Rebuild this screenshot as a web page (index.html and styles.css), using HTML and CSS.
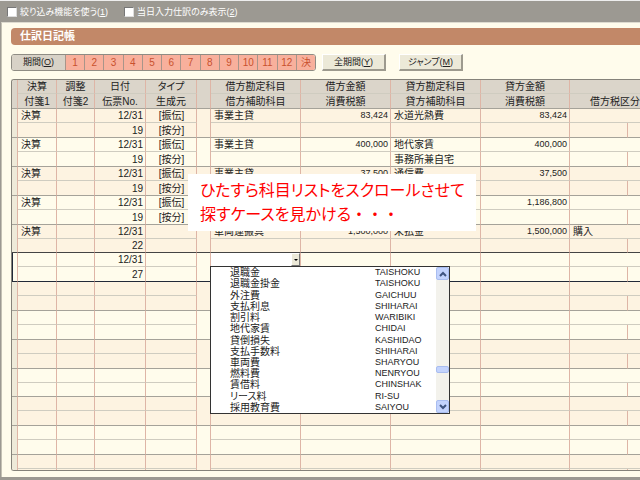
FILE: index.html
```html
<!DOCTYPE html>
<html lang="ja">
<head>
<meta charset="UTF-8">
<title>仕訳日記帳</title>
<link rel="stylesheet" href="styles.css">
</head>
<body>

<!-- Filter bar -->
<div class="toolbar">
  <label><input type="checkbox">絞り込み機能を使う(<u>1</u>)</label>
  <label><input type="checkbox">当日入力仕訳のみ表示(<u>2</u>)</label>
</div>

<main class="panel">
  <h1>仕訳日記帳</h1>

  <div class="controls">
    <div class="period">
      <button class="period-name">期間(<u>O</u>)</button>
      <button>1</button><button>2</button><button>3</button><button>4</button><button>5</button><button>6</button><button>7</button><button>8</button><button>9</button><button>10</button><button>11</button><button>12</button><button>決</button>
    </div>
    <button class="btn">全期間(<u>Y</u>)</button>
    <button class="btn">ジャンプ(<u>M</u>)</button>
  </div>

  <!-- Journal -->
  <div class="sheet">
    <table class="journal">
      <colgroup>
        <col class="c-mark"><col class="c-tag"><col class="c-tag2"><col class="c-date"><col class="c-type"><col class="c-gap">
        <col class="c-account"><col class="c-amount"><col class="c-account"><col class="c-amount2"><col class="c-tax"><col class="c-rest">
      </colgroup>
      <thead>
        <tr><th rowspan="2"></th><th>決算</th><th>調整</th><th>日付</th><th>タイプ</th><th rowspan="2"></th><th>借方勘定科目</th><th>借方金額</th><th>貸方勘定科目</th><th>貸方金額</th><th colspan="2"></th></tr>
        <tr><th>付箋1</th><th>付箋2</th><th>伝票No.</th><th>生成元</th><th>借方補助科目</th><th>消費税額</th><th>貸方補助科目</th><th>消費税額</th><th colspan="2">借方税区分</th></tr>
      </thead>
    </table>
  </div>

  <p class="note">ひたすら科目リストをスクロールさせて<br>探すケースを見かける<span class="dots">・・・</span></p>
</main>

<template id="picker">
  <div class="combo">
    <input type="text" aria-label="借方勘定科目">
    <button aria-label="一覧を開く"><svg viewBox="0 0 4 2"><path d="M0 0h4L2 2z"/></svg></button>
  </div>
  <div class="dropdown">
    <ul role="listbox"></ul>
    <div class="scroll">
      <button aria-label="上へ"><svg viewBox="0 0 8 6"><path d="M1 5l3-3 3 3"/></svg></button>
      <div class="track"><span class="thumb"></span></div>
      <button aria-label="下へ"><svg viewBox="0 0 8 6"><path d="M1 1l3 3 3-3"/></svg></button>
    </div>
  </div>
</template>

<script>
const entries=[
  {tag:'決算',date:'12/31',no:'19',type:'[振伝]',src:'[按分]',dr:'事業主貸',drAmt:'83,424',cr:'水道光熱費',crAmt:'83,424'},
  {tag:'決算',date:'12/31',no:'19',type:'[振伝]',src:'[按分]',dr:'事業主貸',drAmt:'400,000',cr:'地代家賃',crSub:'事務所兼自宅',crAmt:'400,000'},
  {tag:'決算',date:'12/31',no:'19',type:'[振伝]',src:'[按分]',dr:'事業主貸',drAmt:'37,500',cr:'通信費',crAmt:'37,500'},
  {tag:'決算',date:'12/31',no:'19',type:'[振伝]',src:'[按分]',crAmt:'1,186,800'},
  {tag:'決算',date:'12/31',no:'22',dr:'車両運搬具',drAmt:'1,500,000',cr:'未払金',crAmt:'1,500,000',tax:'購入'},
  {date:'12/31',no:'27',current:true},
  {},{},{},{},{},{},{}
];
const accounts=[
  ['退職金','TAISHOKU'],['退職金掛金','TAISHOKU'],['外注費','GAICHUU'],['支払利息','SHIHARAI'],
  ['割引料','WARIBIKI'],['地代家賃','CHIDAI'],['貸倒損失','KASHIDAO'],['支払手数料','SHIHARAI'],
  ['車両費','SHARYOU'],['燃料費','NENRYOU'],['賃借料','CHINSHAK'],['リース料','RI-SU'],['採用教育費','SAIYOU']
];
const td=(text,cls)=>'<td class="'+(cls||'')+'">'+(text||'')+'</td>';
const table=document.querySelector('.journal');
entries.forEach(e=>{
  const b=document.createElement('tbody');
  if(e.current)b.className='current';
  b.innerHTML='<tr><td rowspan="2" class="mark"></td>'+td(e.tag)+td()+td(e.date,'num')+td(e.type,'mid')+'<td rowspan="2"></td>'
    +td(e.dr,'dr')+td(e.drAmt,'amt')+td(e.cr)+td(e.crAmt,'amt')+'<td colspan="2">'+(e.tax||'')+'</td></tr>'
    +'<tr>'+td()+td()+td(e.no,'num')+td(e.src,'mid')+td()+td()+td(e.crSub)+td()+td()+td()+'</tr>';
  table.appendChild(b);
});
const cell=document.querySelector('.current .dr');
cell.appendChild(document.getElementById('picker').content.cloneNode(true));
cell.querySelector('ul').innerHTML=accounts.map(([n,k])=>'<li role="option"><span>'+n+'</span><span class="key">'+k+'</span></li>').join('');
</script>
</body>
</html>
```
FILE: styles.css
```css
*{box-sizing:border-box}
body{margin:0;height:100vh;display:flex;flex-direction:column;background:#9c9992;border-top:1px solid #eee;padding:0 0 3px 1px;overflow:hidden;color:#222;font:10px/14px "Liberation Sans","Noto Sans CJK JP",sans-serif;font-feature-settings:"palt"}
button,input{font:inherit;font-feature-settings:inherit;color:inherit;margin:0;padding:0}
/* Filter bar */
.toolbar{display:flex;gap:16px;align-items:center;height:21px;padding-left:6px;color:#fff;font-size:9px}
.toolbar label{display:flex;align-items:center}
.toolbar input{appearance:none;width:10px;height:10px;margin-right:3px;background:#fff;border:1px solid #777;border-right-color:#ddd;border-bottom-color:#ddd}
/* Panel */
.panel{position:relative;flex:1;min-height:0;display:flex;flex-direction:column;background:#fffcec;border-left:1px solid #c4c1b4;border-top:1px solid #dedbd0;padding:5px 0 6px 9px}
.panel h1{margin:0 0 9px;padding-left:9px;background:#c28868;border-radius:4px 0 0 4px;color:#fff;font-size:11px;font-weight:700;line-height:17px}
.controls{display:flex;align-items:center;height:17px;margin-bottom:8px}
.period{display:flex;width:305px;height:17px;margin-right:6px;border:1px solid #8f8c84;border-radius:3px;overflow:hidden}
.period button{flex:1;border:0;border-left:1px solid #a8958a;background:#f8b09c;color:#c8512e;line-height:15px}
.period .period-name{flex:0 0 53px;border-left:0;background:#d8d2c7;color:#222;font-size:9px}
.btn{width:64px;height:17px;margin-right:13px;background:#ece9d8;border:1px solid #fff;border-right:2px solid #9d9a8e;border-bottom:2px solid #9d9a8e;font-size:9px;line-height:14px}
/* Journal */
.sheet{flex:1;min-height:0;overflow:hidden;border:1px solid #85827a;border-right:0;border-radius:3px 0 0 3px}
.journal{table-layout:fixed;width:649px;border-collapse:separate;border-spacing:0}
.c-mark{width:6px}
.c-tag{width:39px}
.c-tag2{width:38px}
.c-date,.c-type{width:51px}
.c-gap{width:14px}
.c-account{width:90px}
.c-amount{width:90px}
.c-amount2{width:89px}
.c-tax{width:58px}
.c-rest{width:33px}
.journal tr:first-child{height:14px}
.journal tr:last-child{height:15px}
.journal tbody:nth-of-type(5n) tr{height:14px}
.journal th,.journal td{padding:0;border-right:1px solid #deb5a6;border-bottom:1px solid #cfccc0;line-height:13px;white-space:nowrap;vertical-align:middle}
.journal th{background:#dbd5ca;font-weight:400;text-align:center}
.journal td{padding:0 2px 0 3px}
.journal tr:last-child td,.journal tr:last-child th,.journal [rowspan]{border-bottom-color:#a5a299}
.journal tbody:nth-of-type(odd){background:#fdf3e1}
.journal .mark{background:#eeead9}
.journal .num{text-align:right}
.journal .mid{text-align:center}
.journal .amt{font-size:9px;text-align:right}
/* current entry is ruled in dark lines */
.journal tbody:has(+ .current) tr:last-child td,.journal tbody:has(+ .current) [rowspan]{border-bottom-color:#444}
.journal .current tr:last-child td,.journal .current [rowspan]{border-bottom-color:#222938}
.journal .current .mark{background:#fffcec;border-left:1px solid #222938}
/* Account picker */
.journal .dr{position:relative}
.combo{position:absolute;inset:0;display:flex;background:#fff}
.combo input{flex:1;min-width:0;border:0;background:#fff}
.combo button{display:grid;place-items:center;width:9px;background:#ece9d8;border:1px solid #fff;border-right-color:#777;border-bottom-color:#777}
.combo svg{width:4px;height:2px}
.dropdown{position:absolute;z-index:1;left:-1px;top:100%;display:flex;width:240px;height:148px;background:#fff;border:1px solid #333}
.dropdown ul{flex:1;display:flex;flex-direction:column;margin:0;padding:0;list-style:none}
.dropdown li{flex:1;display:grid;grid-template-columns:145px 1fr;align-items:center;padding-left:19px;line-height:11px}
.key{font-size:9px}
.scroll{display:flex;flex-direction:column;width:13px;background:#f3f2ec}
.scroll button{display:grid;place-items:center;height:13px;background:#c3d3fd;border:1px solid #a9bdf0;border-radius:2px}
.scroll svg{width:8px;height:6px;fill:none;stroke:#3f5480;stroke-width:2}
.track{flex:1;display:flex;flex-direction:column;justify-content:flex-end;padding-bottom:27px}
.thumb{height:7px;background:#c3d3fd;border:1px solid #a9bdf0;border-radius:2px}
/* Caption over the sheet */
.note{position:absolute;z-index:2;left:186px;top:151px;width:288px;margin:0;padding:5px 12px 4px;background:#fff;color:#f00;font-size:16px;line-height:24px;white-space:nowrap}
.dots{font-feature-settings:normal}
```
